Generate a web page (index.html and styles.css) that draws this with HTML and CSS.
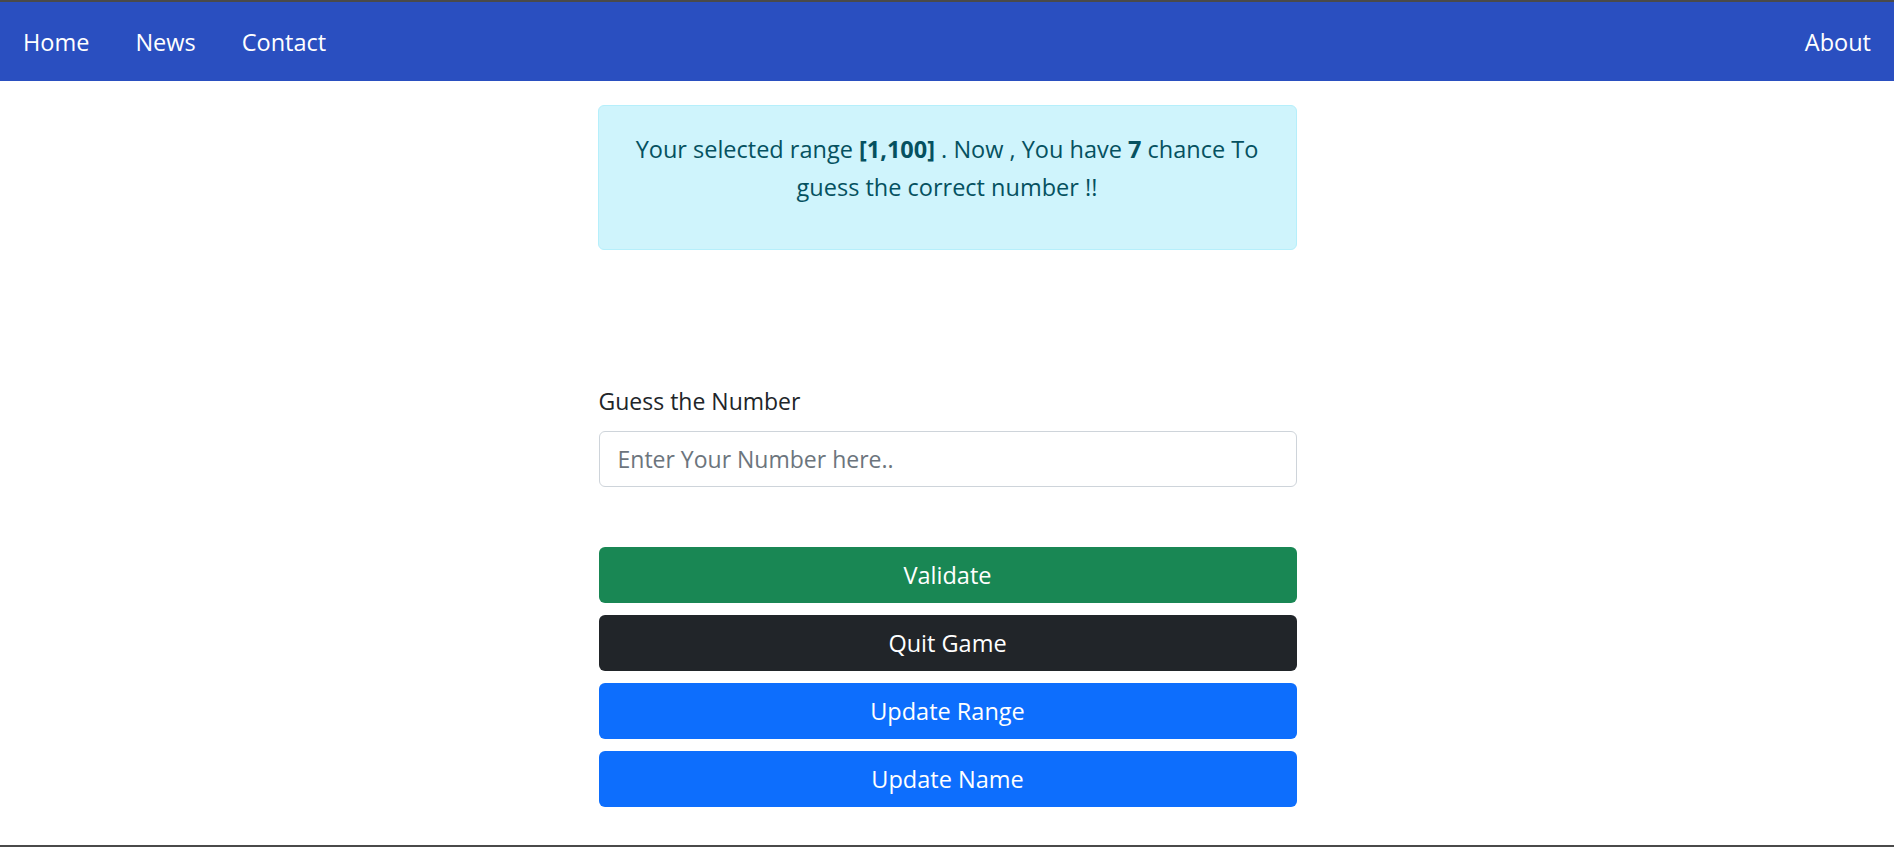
FILE: index.html
```html
<!DOCTYPE html>
<html lang="en">
<head>
<meta charset="utf-8">
<title>Guess the Number</title>
<link rel="stylesheet" href="styles.css">
</head>
<body>
<div class="page">
  <nav class="navbar">
    <div class="nav-left">
      <a class="nav-link" href="#">Home</a>
      <a class="nav-link" href="#">News</a>
      <a class="nav-link" href="#">Contact</a>
    </div>
    <a class="nav-link" href="#">About</a>
  </nav>
  <main class="main">
    <div class="column">
      <div class="alert">
        <p>Your selected range <b>[1,100]</b> . Now , You have <b>7</b> chance To guess the correct number !!</p>
      </div>
      <form class="game-form">
        <label class="form-label" for="guess">Guess the Number</label>
        <input class="form-control" id="guess" type="text" placeholder="Enter Your Number here..">
        <div class="buttons">
          <button type="button" class="btn btn-success">Validate</button>
          <button type="button" class="btn btn-dark">Quit Game</button>
          <button type="button" class="btn btn-primary">Update Range</button>
          <button type="button" class="btn btn-primary">Update Name</button>
        </div>
      </form>
    </div>
  </main>
</div>
</body>
</html>
```
FILE: styles.css
```css
* { box-sizing: border-box; }
html, body { margin: 0; padding: 0; }
body {
  font-family: "Open Sans", "Noto Sans", sans-serif;
  font-size: 23.5px;
  line-height: 36px;
  color: #212529;
  background: #fff;
}
.page {
  height: 847px;
  border-top: 2px solid #4a4a4a;
  border-bottom: 2px solid #4a4a4a;
  display: flex;
  flex-direction: column;
  overflow: hidden;
}
.navbar {
  height: 79px;
  flex: none;
  background: #2a4fc0;
  display: flex;
  align-items: center;
  justify-content: space-between;
  padding: 0 23px 0 23px;
}
.nav-left {
  display: flex;
  gap: 46px;
}
.nav-link {
  color: #fff;
  text-decoration: none;
}
.main {
  flex: 1;
  display: flex;
  justify-content: center;
}
.column {
  width: 699px;
  padding-top: 24px;
}
.alert {
  background: #cff4fc;
  border: 1px solid #b6effb;
  border-radius: 6px;
  color: #055160;
  text-align: center;
  padding: 24px 24px 24px;
  line-height: 38px;
}
.alert p {
  margin: 0 0 19px;
}
.alert b { font-weight: 700; color: #055160; }
.game-form {
  display: flex;
  flex-direction: column;
  padding-top: 133px;
}
.form-label {
  display: block;
  margin-bottom: 12px;
  padding-left: 1px;
  font-size: 23px;
}
.form-control {
  height: 56px;
  margin-left: 1px;
  border: 1px solid #ced4da;
  border-radius: 6px;
  padding: 0 18px;
  font: inherit;
  font-size: 23px;
  color: #212529;
  background: #fff;
}
.form-control::placeholder { color: #6c757d; }
.buttons {
  display: flex;
  flex-direction: column;
  gap: 12px;
  margin-top: 60px;
  padding-left: 1px;
}
.btn {
  height: 56px;
  border: none;
  border-radius: 6px;
  color: #fff;
  font: inherit;
  line-height: 36px;
  cursor: pointer;
}
.btn-success { background: #198754; }
.btn-dark { background: #212529; }
.btn-primary { background: #0d6efd; }
```
